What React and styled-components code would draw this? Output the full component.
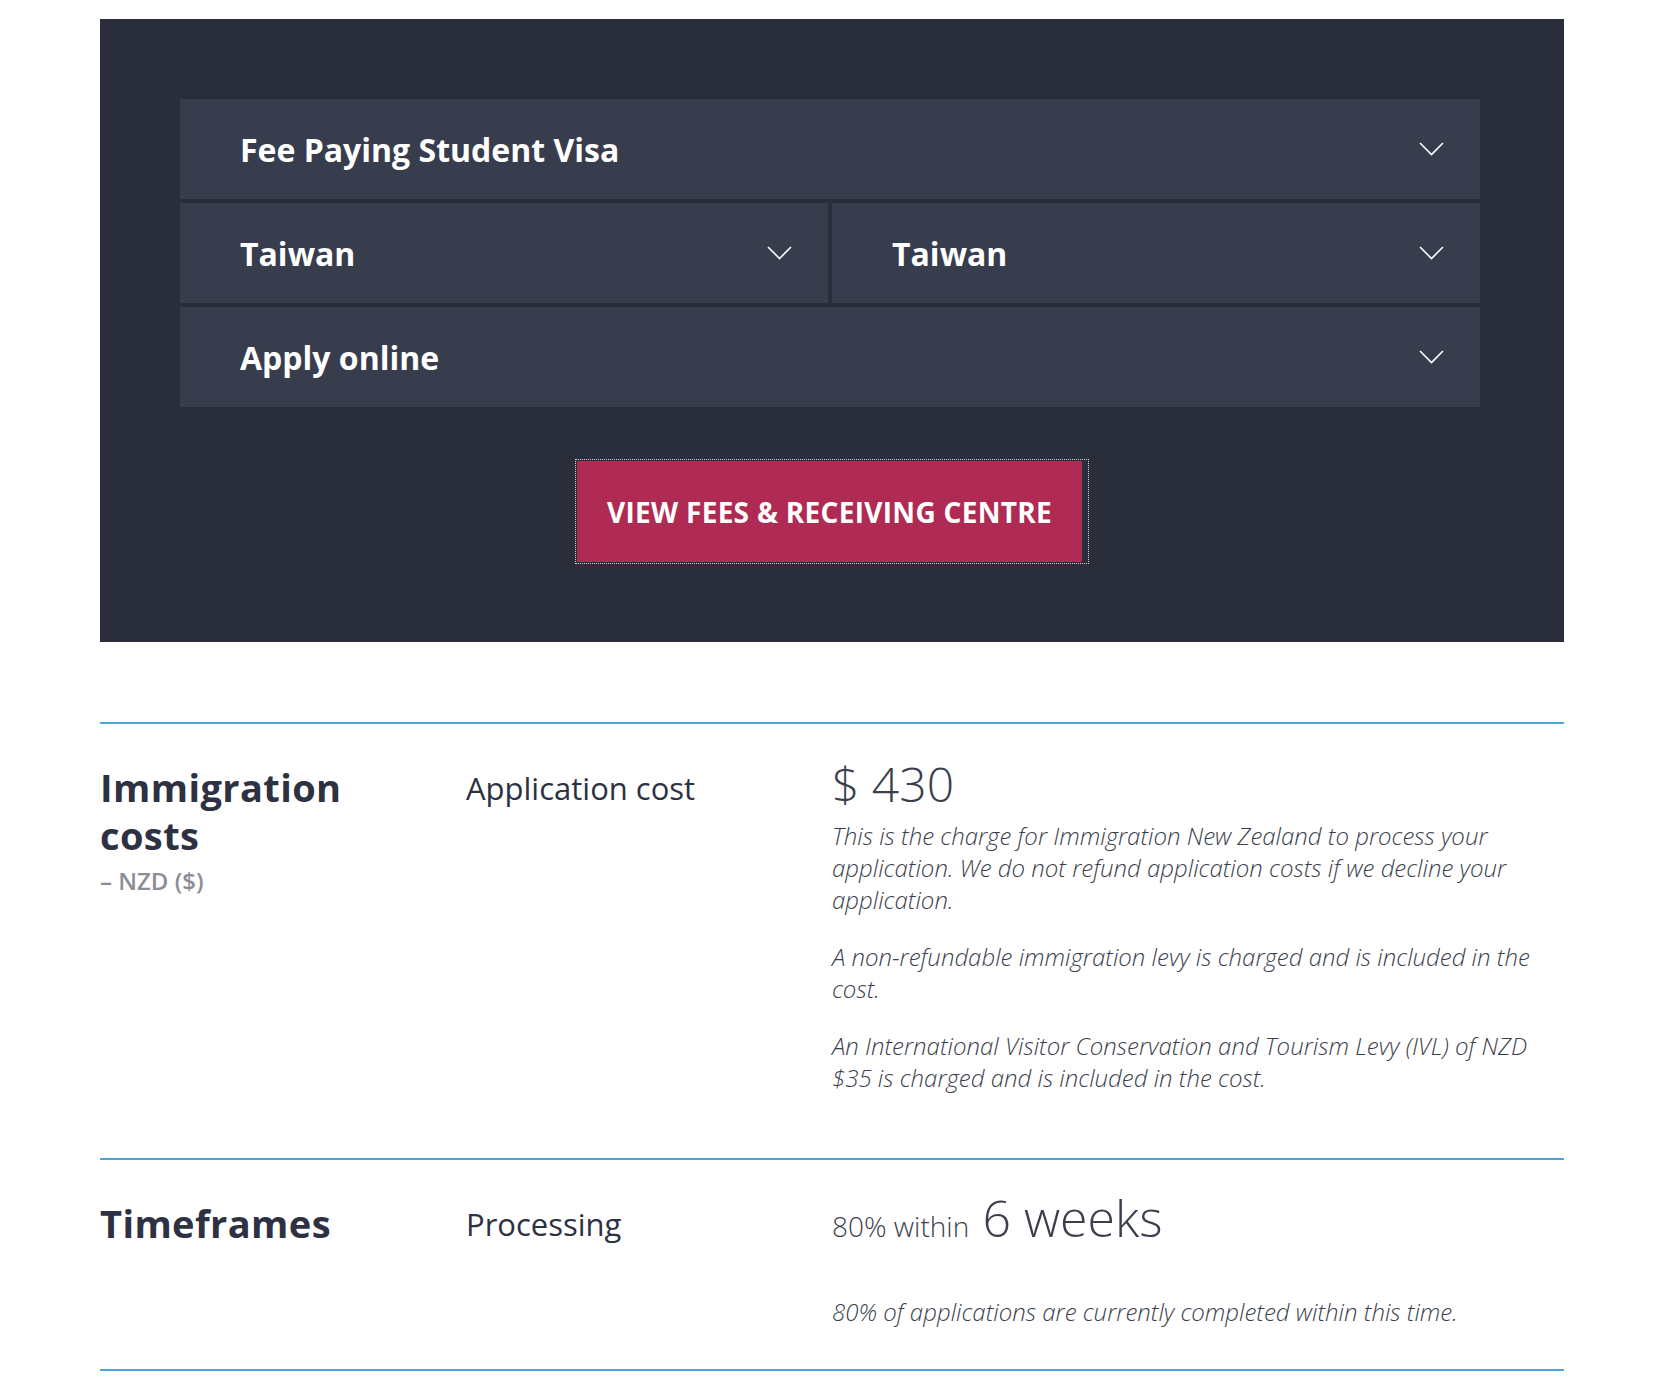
import React from 'react';
import styled, { createGlobalStyle } from 'styled-components';

const GlobalStyle = createGlobalStyle`
    body {
        margin: 0;
        background: #fff;
        font-family: "Open Sans", "Noto Sans", sans-serif;
        color: #2d3142;
    }
`

const Page = styled.div`
    box-sizing: border-box;
    width: 1464px;
    margin: 19px 0 0 100px;
`

const FinderPanel = styled.section`
    background: #2a2e3a;
    padding: 80px 84px 79px 80px;
    display: flex;
    flex-direction: column;
    align-items: center;
`

const Selects = styled.div`
    align-self: stretch;
    display: flex;
    flex-direction: column;
    gap: 4px;
`

const SelectRow = styled.div`
    display: flex;
    gap: 4px;

    & > * {
        flex: 1 1 0;
    }
`

const Select = styled.div`
    height: 100px;
    box-sizing: border-box;
    background: #383d4e;
    padding: 0 36px 0 60px;
    display: flex;
    align-items: center;
    justify-content: space-between;
    color: #fff;
    font-size: 32px;
    font-weight: 700;
`

const ButtonOutline = styled.a`
    display: inline-block;
    margin: 53px 0 0 4px;
    padding: 1px 6px 1px 1px;
    outline: 1px dotted #d0d2d6;
    cursor: pointer;
`

const Button = styled.span`
    display: flex;
    align-items: center;
    justify-content: center;
    width: 505px;
    height: 101px;
    background: #b02b53;
    color: #fff;
    font-size: 28px;
    font-weight: 700;
    letter-spacing: 0.3px;
    text-transform: uppercase;
`

const SectionsWrap = styled.div`
    margin-top: 80px;
`

const CostSection = styled.section`
    display: grid;
    grid-template-columns: 366px 366px 1fr;
    border-top: 2px solid #4aa8d9;
    padding: 36px 0 39px;
    border-bottom: ${p => (p.$last ? '2px solid #4aa8d9' : 'none')};
`

const Heading = styled.h2`
    margin: 3px 0 0;
    font-size: 38px;
    line-height: 48px;
    font-weight: 700;
    letter-spacing: 0.4px;
    color: #2d3142;
`

const Currency = styled.div`
    font-size: 24px;
    font-weight: 600;
    color: #8b8e97;
    margin-top: 5px;
`

const Label = styled.div`
    font-size: 31px;
    line-height: 40px;
    margin-top: 8px;
    color: #2d3142;
`

const Amount = styled.div`
    font-size: 48px;
    line-height: 50px;
    font-weight: 300;
    color: #3b3f4d;
    margin: -1px 0 11px;
`

const Note = styled.p`
    margin: 0 0 25px;
    font-size: 24px;
    line-height: 32px;
    font-style: italic;
    font-weight: 300;
    color: #3b3f4d;
`

const TimeNote = styled(Note)`
    margin: 0 0 2px;
`

const Duration = styled.div`
    color: #3b3f4d;
    font-weight: 300;
    font-size: 28px;
    line-height: 44px;
    margin-bottom: 48px;

    span {
        font-size: 50px;
        margin-left: 6px;
    }
`

function Chevron() {
    return (
        <svg width="25" height="14" viewBox="0 0 25 14" fill="none">
            <polyline points="1,1 12.5,12.5 24,1" stroke="#fff" strokeWidth="1.6" />
        </svg>
    )
}

function App() {
    return (
        <Page>
            <GlobalStyle />
            <FinderPanel>
                <Selects>
                    <Select>Fee Paying Student Visa <Chevron /></Select>
                    <SelectRow>
                        <Select>Taiwan <Chevron /></Select>
                        <Select>Taiwan <Chevron /></Select>
                    </SelectRow>
                    <Select>Apply online <Chevron /></Select>
                </Selects>
                <ButtonOutline>
                    <Button>View fees &amp; receiving centre</Button>
                </ButtonOutline>
            </FinderPanel>

            <SectionsWrap>
                <CostSection>
                    <div>
                        <Heading>Immigration<br />costs</Heading>
                        <Currency>– NZD ($)</Currency>
                    </div>
                    <Label>Application cost</Label>
                    <div>
                        <Amount>$ 430</Amount>
                        <Note>This is the charge for Immigration New Zealand to process your application. We do not refund application costs if we decline your application.</Note>
                        <Note>A non-refundable immigration levy is charged and is included in the cost.</Note>
                        <Note>An International Visitor Conservation and Tourism Levy (IVL) of NZD $35 is charged and is included in the cost.</Note>
                    </div>
                </CostSection>
                <CostSection $last>
                    <Heading>Timeframes</Heading>
                    <Label>Processing</Label>
                    <div>
                        <Duration>80% within <span>6 weeks</span></Duration>
                        <TimeNote>80% of applications are currently completed within this time.</TimeNote>
                    </div>
                </CostSection>
            </SectionsWrap>
        </Page>
    )
}

export default App
